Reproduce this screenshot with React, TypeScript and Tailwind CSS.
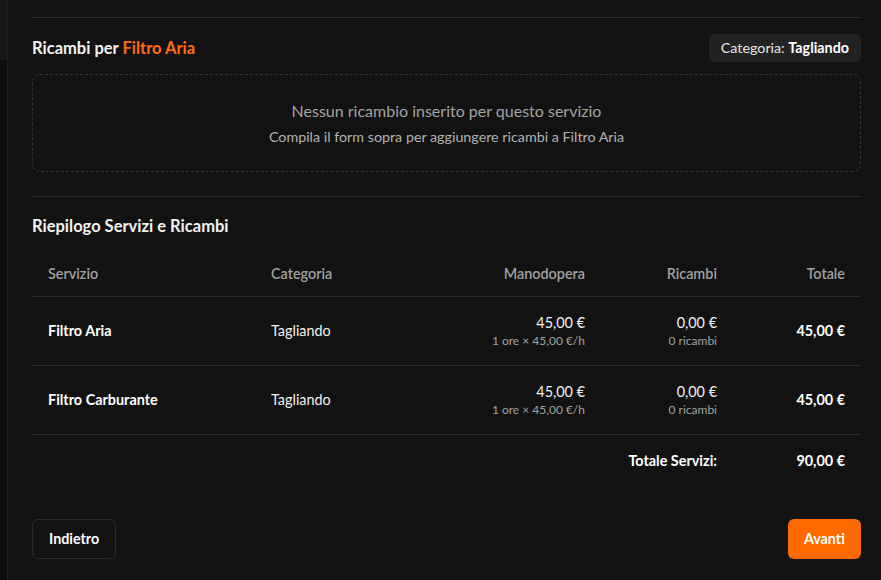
import React from "react";

const rows = [
  { name: "Filtro Aria", cat: "Tagliando" },
  { name: "Filtro Carburante", cat: "Tagliando" },
];

export default function App() {
  return (
    <div
      className="w-[881px] h-[580px] overflow-hidden bg-[#121212] flex text-[#f2f2f2]"
      style={{ fontFamily: "Lato, 'Noto Sans', sans-serif" }}
    >
      <div className="w-[8px] shrink-0 flex flex-col border-r border-[#1d1d1d]">
        <div className="h-[61px] bg-[#161616] border-b border-[#0a0a0a]" />
        <div className="flex-1 bg-[#0e0e0e]" />
      </div>
      <div className="flex-1 pl-[24px] pr-[20px] flex flex-col">
        <div className="mt-[17px] border-t border-[#2b2b2b]" />
        <div className="mt-[16px] flex items-center justify-between h-[28px]">
          <h3 className="text-[16.5px] font-bold leading-6">
            Ricambi per <span className="text-[#ff6a13]">Filtro Aria</span>
          </h3>
          <div className="bg-[#222222] rounded-md px-3 h-[28px] flex items-center text-[14.3px] text-[#e8e8e8]">
            Categoria:&nbsp;<span className="font-bold text-white">Tagliando</span>
          </div>
        </div>
        <div className="mt-3 rounded-lg border border-dashed border-[#333333] py-6 flex flex-col items-center">
          <p className="text-[16px] leading-6 text-[#a3a3a3]">
            Nessun ricambio inserito per questo servizio
          </p>
          <p className="mt-1 text-[14.3px] leading-5 text-[#b3b3b3]">
            Compila il form sopra per aggiungere ricambi a Filtro Aria
          </p>
        </div>
        <div className="mt-6 border-t border-[#2b2b2b]" />
        <h3 className="mt-[17px] text-[16.5px] font-bold leading-6">Riepilogo Servizi e Ricambi</h3>
        <div className="mt-[14px] text-[14.4px]">
          <div className="grid grid-cols-[223px_180px_1fr_132px_128px] border-b border-[#2b2b2b] font-semibold text-[#a0a0a0] leading-5">
            <div className="px-4 py-3">Servizio</div>
            <div className="px-4 py-3">Categoria</div>
            <div className="px-4 py-3 text-right">Manodopera</div>
            <div className="px-4 py-3 text-right">Ricambi</div>
            <div className="px-4 py-3 text-right">Totale</div>
          </div>
          {rows.map((r) => (
            <div
              key={r.name}
              className="grid grid-cols-[223px_180px_1fr_132px_128px] border-b border-[#2b2b2b] items-center"
            >
              <div className="px-4 py-4 font-bold text-white">{r.name}</div>
              <div className="px-4 py-4 text-[#f0f0f0]">{r.cat}</div>
              <div className="px-4 py-4 text-right">
                <div className="leading-5 text-[#f0f0f0]">45,00 €</div>
                <div className="leading-4 text-[12px] text-[#a3a3a3]">1 ore × 45,00 €/h</div>
              </div>
              <div className="px-4 py-4 text-right">
                <div className="leading-5 text-[#f0f0f0]">0,00 €</div>
                <div className="leading-4 text-[12px] text-[#a3a3a3]">0 ricambi</div>
              </div>
              <div className="px-4 py-4 text-right font-bold text-white">45,00 €</div>
            </div>
          ))}
          <div className="grid grid-cols-[1fr_128px] font-bold text-white leading-5">
            <div className="px-4 py-4 text-right">Totale Servizi:</div>
            <div className="px-4 py-4 text-right">90,00 €</div>
          </div>
        </div>
        <div className="mt-8 flex justify-between">
          <button className="h-10 px-4 rounded-md border border-[#2a2a2a] bg-[#121212] text-[14.3px] font-bold text-white">
            Indietro
          </button>
          <button className="h-10 px-4 rounded-md bg-[#ff6a00] text-[14.3px] font-bold text-white">
            Avanti
          </button>
        </div>
      </div>
    </div>
  );
}
